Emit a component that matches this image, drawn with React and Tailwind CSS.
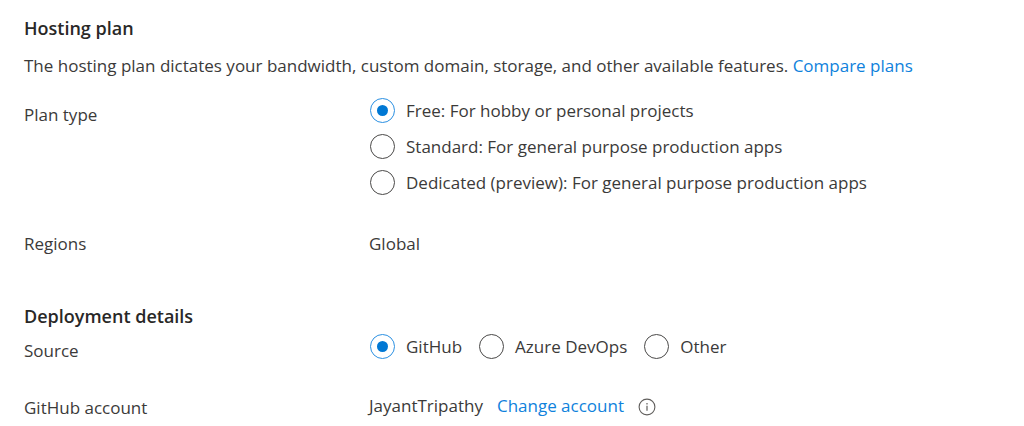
import React, { useState } from "react";

const plans = [
  { id: "free", label: "Free: For hobby or personal projects" },
  { id: "standard", label: "Standard: For general purpose production apps" },
  { id: "dedicated", label: "Dedicated (preview): For general purpose production apps" },
];

const sources = [
  { id: "github", label: "GitHub" },
  { id: "devops", label: "Azure DevOps" },
  { id: "other", label: "Other" },
];

export default function App() {
  const [plan, setPlan] = useState("free");
  const [source, setSource] = useState("github");

  return (
    <main className="min-h-screen bg-white px-6 pt-4 font-['Open_Sans','Noto_Sans',sans-serif] text-[17px] leading-6 text-[#3b3a39]">
      {/* Hosting plan */}
      <section>
        <h2 className="text-lg leading-6 font-semibold text-[#292827]">Hosting plan</h2>
        <p className="mt-3.5">
          The hosting plan dictates your bandwidth, custom domain, storage, and other available features.{" "}
          <a href="#plans" className="text-[#0f82dc] hover:underline">
            Compare plans
          </a>
        </p>

        <div className="mt-5 grid grid-cols-[345px_minmax(0,1fr)]">
          <p id="plan-label" className="pt-[5px]">Plan type</p>
          <div role="radiogroup" aria-labelledby="plan-label" className="flex flex-col items-start gap-3">
            {plans.map((p) => (
              <Radio key={p.id} name="plan" option={p} value={plan} onChange={setPlan} />
            ))}
          </div>
        </div>

        <div className="mt-[38px] grid grid-cols-[345px_minmax(0,1fr)]">
          <p>Regions</p>
          <p>Global</p>
        </div>
      </section>

      {/* Deployment details */}
      <section className="mt-12">
        <h2 className="text-lg leading-6 font-semibold text-[#292827]">Deployment details</h2>

        <div className="mt-1.5 grid grid-cols-[345px_minmax(0,1fr)]">
          <p id="source-label" className="pt-[5px]">Source</p>
          <div role="radiogroup" aria-labelledby="source-label" className="flex flex-wrap gap-x-4 gap-y-3">
            {sources.map((s) => (
              <Radio key={s.id} name="source" option={s} value={source} onChange={setSource} />
            ))}
          </div>
        </div>

        <div className="mt-7 grid grid-cols-[345px_minmax(0,1fr)]">
          <p className="pt-[5px]">GitHub account</p>
          <div className="flex items-center">
            <span>JayantTripathy</span>
            <a href="#account" className="ml-3.5 text-[#0f82dc] hover:underline">
              Change account
            </a>
            <button type="button" aria-label="About the GitHub account" className="ml-3.5 pt-0.5">
              <InfoIcon />
            </button>
          </div>
        </div>
      </section>
    </main>
  );
}

function Radio({ name, option, value, onChange }) {
  return (
    <label className="flex h-6 cursor-pointer items-center gap-[11px]">
      <input
        type="radio"
        name={name}
        value={option.id}
        checked={value === option.id}
        onChange={() => onChange(option.id)}
        className="ml-px grid size-[25px] shrink-0 appearance-none place-content-center rounded-full border border-[#4a4948] bg-white before:size-[11px] before:rounded-full checked:border-[#2b90e2] checked:before:bg-[#0078d4]"
      />
      <span className="pt-0.5">{option.label}</span>
    </label>
  );
}

function InfoIcon() {
  return (
    <svg viewBox="0 0 18 18" className="size-[18px]" fill="none" stroke="#605e5c">
      <circle cx="9" cy="9" r="7.9" strokeWidth="1.1" />
      <path d="M9 7.8v5" strokeWidth="1.2" />
      <path d="M9 5v1.4" strokeWidth="1.2" />
    </svg>
  );
}
